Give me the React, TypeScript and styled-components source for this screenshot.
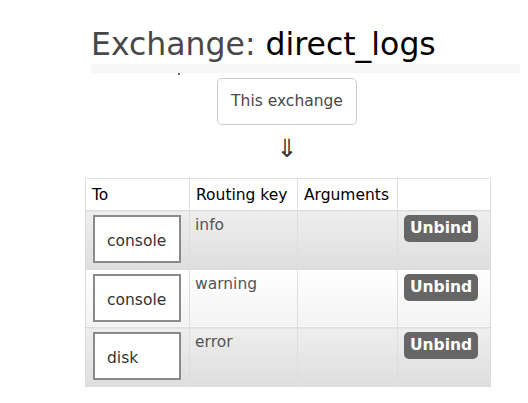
import styled, { createGlobalStyle } from "styled-components";

const GlobalStyle = createGlobalStyle`
  html, body {
    margin: 0;
    padding: 0;
    background: #fff;
  }
  body {
    font-family: "DejaVu Sans", Verdana, sans-serif;
    color: #484848;
  }
`;

const Page = styled.div`
  width: 528px;
  height: 403px;
  overflow: hidden;
  padding: 27px 0 0 91px;
  box-sizing: border-box;
`;

const Title = styled.h1`
  margin: 0;
  font-size: 31.5px;
  font-weight: normal;
  line-height: 34px;
  color: #484848;
  white-space: nowrap;

  b {
    font-weight: normal;
    color: #000;
  }
`;

const SectionBar = styled.div`
  position: relative;
  width: 429px;
  height: 9px;
  margin-top: 3px;
  background: #f6f6f6;

  &::after {
    content: "";
    position: absolute;
    left: 87px;
    top: 9px;
    width: 2px;
    height: 2px;
    background: #666;
  }
`;

const Flow = styled.div`
  width: 392px;
  display: flex;
  flex-direction: column;
  align-items: center;
  margin-top: 5px;
`;

const Endpoint = styled.span`
  display: inline-block;
  border: 1px solid #ccc;
  border-radius: 5px;
  padding: 13px 13px;
  font-size: 15.5px;
  line-height: 19px;
  color: #484848;
  background: #fff;
`;

const Arrow = styled.div`
  font-size: 25px;
  line-height: 30px;
  color: #333;
  margin-top: 9px;
`;

const Table = styled.table`
  margin: 14px 0 0 -6px;
  border-collapse: collapse;
  font-size: 15.5px;
`;

const Th = styled.th<{ w: number }>`
  width: ${({ w }) => w}px;
  box-sizing: border-box;
  height: 32px;
  padding: 0 6px;
  text-align: left;
  font-weight: normal;
  color: #000;
  border: 1px solid #ddd;
  background: #fff;
`;

const Td = styled.td<{ alt: boolean }>`
  height: 58.5px;
  box-sizing: border-box;
  padding: 4px 5px 4px 7px;
  vertical-align: top;
  border: 1px solid #ddd;
  color: #555;
  background: ${({ alt }) =>
    alt
      ? "linear-gradient(to bottom, #eeeeee 0%, #dedede 100%)"
      : "linear-gradient(to bottom, #ffffff 0%, #f3f3f3 100%)"};
`;

const KeyText = styled.div`
  margin-left: -2px;
  padding-top: 1px;
`;

const Target = styled.span`
  display: block;
  width: 88px;
  height: 48px;
  box-sizing: border-box;
  border: 2px solid #8a8a8a;
  background: #fff;
  padding: 15px 0 0 12px;
  color: #333;
  line-height: 19px;
`;

const UnbindButton = styled.button`
  display: block;
  margin: 0 0 0 -1px;
  padding: 3px 6px 4px;
  border: none;
  border-radius: 5px;
  background: #666;
  color: #fff;
  font-family: "DejaVu Sans", Verdana, sans-serif;
  font-size: 15.5px;
  font-weight: bold;
  line-height: 20px;
`;

const bindings = [
  { to: "console", key: "info" },
  { to: "console", key: "warning" },
  { to: "disk", key: "error" },
];

export default function App() {
  return (
    <Page>
      <GlobalStyle />
      <Title>
        Exchange: <b>direct_logs</b>
      </Title>
      <SectionBar />
      <Flow>
        <Endpoint>This exchange</Endpoint>
        <Arrow>⇓</Arrow>
      </Flow>
      <Table>
        <thead>
          <tr>
            <Th w={104}>To</Th>
            <Th w={108}>Routing key</Th>
            <Th w={100}>Arguments</Th>
            <Th w={93}></Th>
          </tr>
        </thead>
        <tbody>
          {bindings.map((b, i) => (
            <tr key={i}>
              <Td alt={i % 2 === 0}>
                <Target>{b.to}</Target>
              </Td>
              <Td alt={i % 2 === 0}>
                <KeyText>{b.key}</KeyText>
              </Td>
              <Td alt={i % 2 === 0}></Td>
              <Td alt={i % 2 === 0}>
                <UnbindButton>Unbind</UnbindButton>
              </Td>
            </tr>
          ))}
        </tbody>
      </Table>
    </Page>
  );
}
